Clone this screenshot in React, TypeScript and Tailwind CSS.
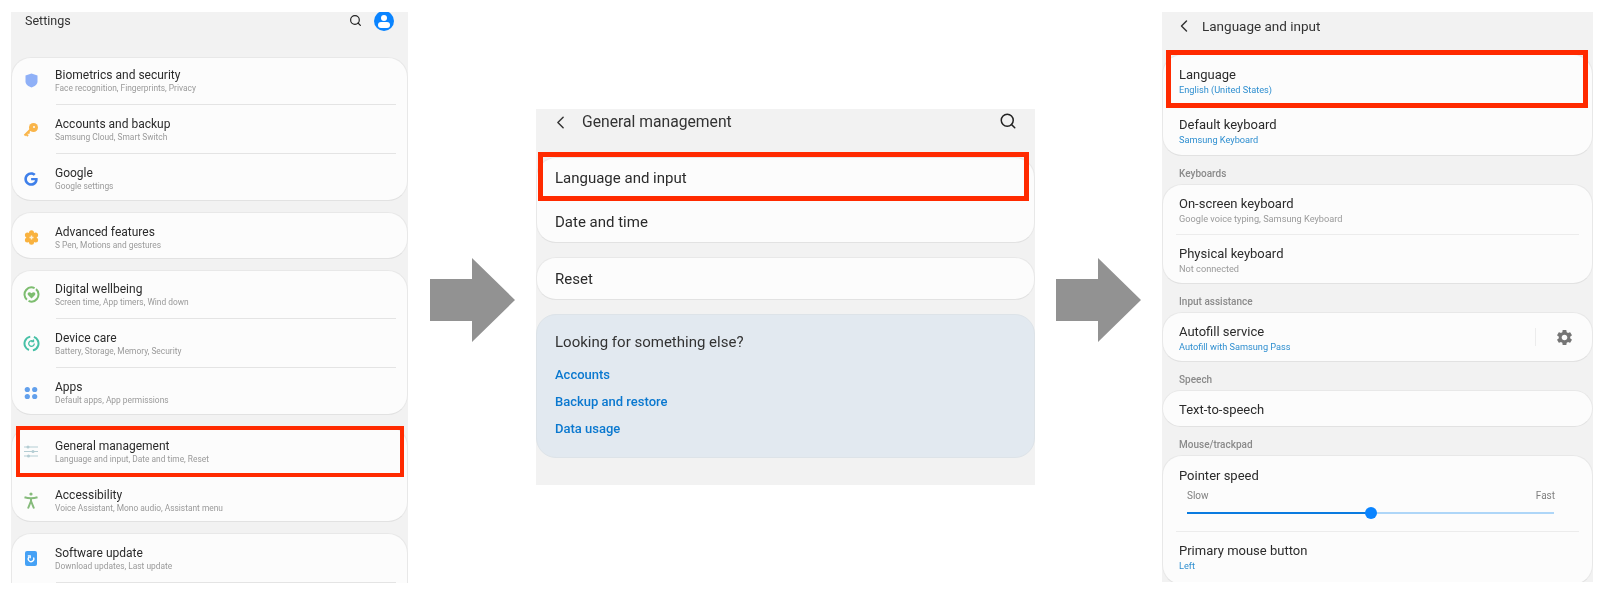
import { ChevronLeft, Search } from "lucide-react";
import { MdSettings } from "react-icons/md";
import { FaGoogle } from "react-icons/fa";
import type { ReactNode } from "react";

type RowProps = {
  icon?: ReactNode;
  title: string;
  sub: string;
  divider?: boolean;
};

const ShieldIcon = () => (
  <svg width="13" height="15" viewBox="0 0 13 15">
    <path d="M6.500.5 12.500 2.500v6c0 3-3 5-6 6-3-1-6-3-6-6v-6z" fill="#8fb0f7" />
  </svg>
);

const KeyIcon = () => (
  <svg width="16" height="16" viewBox="0 0 16 16">
    <circle cx="10.500" cy="5.500" r="4.500" fill="#f9b54a" />
    <circle cx="11" cy="5" r="1" fill="#fcfcfc" />
    <path d="M7.500 7.500 1.500 13.500M3 12l2 2M5 10l1.500 1.500" stroke="#f9b54a" strokeWidth="2" fill="none" />
  </svg>
);

const FlowerIcon = () => (
  <svg width="15" height="15" viewBox="0 0 15 15">
    <g fill="#f9b23f">
      <circle cx="7.500" cy="7.500" r="5.200" />
      <circle cx="7.500" cy="2.800" r="2.500" />
      <circle cx="7.500" cy="12.200" r="2.500" />
      <circle cx="3.400" cy="5.100" r="2.500" />
      <circle cx="11.600" cy="5.100" r="2.500" />
      <circle cx="3.400" cy="9.900" r="2.500" />
      <circle cx="11.600" cy="9.900" r="2.500" />
    </g>
    <path d="M7.500 5.500v4M5.500 7.500h4" stroke="#fdf0d8" strokeWidth="1.400" />
  </svg>
);

const WellbeingIcon = () => (
  <svg width="17" height="17" viewBox="0 0 17 17">
    <circle cx="8.500" cy="8.500" r="7" stroke="#7dbd6f" strokeWidth="2" fill="none" strokeDasharray="20 2 20 2" transform="rotate(-50 8.500 8.500)" />
    <path d="M8.500 12.500 5 9c-1.400-1.700 1-4 3.500-1.800C11 5 13.400 7.300 12 9z" fill="#7dbd6f" />
  </svg>
);

const CareIcon = () => (
  <svg width="17" height="17" viewBox="0 0 17 17">
    <circle cx="8.500" cy="8.500" r="7" stroke="#46c0a6" strokeWidth="2" fill="none" strokeDasharray="18 4 18 4" transform="rotate(-70 8.500 8.500)" />
    <path d="M11.300 8.500a2.800 2.800 0 1 1-1.200-2.300M10.500 4.500v2.200H8.300" stroke="#46c0a6" strokeWidth="1.300" fill="none" />
  </svg>
);

const AppsIcon = () => (
  <svg width="14" height="14" viewBox="0 0 14 14" fill="#62a0ec">
    <circle cx="3.300" cy="3.500" r="2.600" />
    <circle cx="10.700" cy="3.500" r="2.600" />
    <circle cx="3.300" cy="10.500" r="2.600" />
    <circle cx="10.700" cy="10.500" r="2.600" />
  </svg>
);

const SlidersIcon = () => (
  <svg width="14" height="13" viewBox="0 0 14 13" fill="#b4cdd3">
    <rect x="0" y="1.500" width="14" height="1" />
    <rect x="0" y="6" width="14" height="1" />
    <rect x="0" y="10.500" width="14" height="1" />
    <circle cx="4" cy="2" r="1.500" />
    <circle cx="9" cy="6.500" r="1.500" />
    <circle cx="4.500" cy="11" r="1.500" />
  </svg>
);

const PersonIcon = () => (
  <svg width="14" height="17" viewBox="0 0 14 17">
    <circle cx="7" cy="2" r="1.600" fill="#86bb7b" />
    <path d="M.5 5.200c2.500.8 4 1 6.500 1s4-.2 6.500-1M7 6.500V9M7 9l-3 7.500M7 9l3 7.500" stroke="#86bb7b" strokeWidth="2" fill="none" />
  </svg>
);

const UpdateIcon = () => (
  <svg width="12" height="15" viewBox="0 0 12 15">
    <rect width="12" height="15" rx="2" fill="#45a1f5" />
    <path d="M8.500 6.500a2.800 2.800 0 1 1-4.500-.6M2.800 4.800h2.400v2.400" stroke="#ffffff" strokeWidth="1.300" fill="none" />
  </svg>
);

function Card({ children, className }: { children: ReactNode; className?: string }) {
  return (
    <div className={"border border-[#e8e8e8] border-b-[#e2e2e2] rounded-[20px] bg-[#fcfcfc] " + (className ?? "")}>
      {children}
    </div>
  );
}

function SettingRow({ icon, title, sub, divider }: RowProps) {
  return (
    <div className="relative flex h-[49px] items-center pb-[3px]">
      <div className="mr-[5px] flex w-[38px] shrink-0 justify-center pb-[1px]">{icon}</div>
      <div className="flex flex-col">
        <span className="text-[12px] leading-[14px] text-[#2b2b2b]">{title}</span>
        <span className="text-[8.4px] leading-[12px] text-[#9a9a9a]">{sub}</span>
      </div>
      {divider && <div className="absolute bottom-[2px] left-[44px] right-[11px] h-px bg-[#e4e4e4]" />}
    </div>
  );
}

function SettingsPanel() {
  return (
    <div className="relative ml-[11px] mt-[12px] h-[571px] w-[397px] shrink-0 overflow-hidden bg-[#f2f2f2]">
      <div className="flex h-[45px] items-start pl-[14px] pt-[1px]">
        <span className="text-[12.5px] leading-[16px] text-[#333333]">Settings</span>
        <Search className="absolute left-[338px] top-[2px] text-[#222222]" size={13} strokeWidth={2.2} />
        <div className="absolute left-[363px] top-[-1px] h-[20px] w-[20px] overflow-hidden rounded-full bg-[#0a84ff]">
          <div className="mx-auto mt-[4px] h-[6px] w-[6px] rounded-full bg-white" />
          <div className="mx-auto mt-[1px] h-[6px] w-[12px] rounded-full bg-white" />
        </div>
      </div>
      <div className="flex flex-col gap-[11px]">
        <Card className="h-[144px]">
          <SettingRow icon={<ShieldIcon />} title="Biometrics and security" sub="Face recognition, Fingerprints, Privacy" divider />
          <SettingRow icon={<KeyIcon />} title="Accounts and backup" sub="Samsung Cloud, Smart Switch" divider />
          <SettingRow icon={<FaGoogle className="text-[#3f80ea]" size={14} />} title="Google" sub="Google settings" />
        </Card>
        <Card className="h-[47px] pt-[2px]">
          <SettingRow icon={<FlowerIcon />} title="Advanced features" sub="S Pen, Motions and gestures" />
        </Card>
        <Card className="h-[145px] pt-[1px]">
          <SettingRow icon={<WellbeingIcon />} title="Digital wellbeing" sub="Screen time, App timers, Wind down" divider />
          <SettingRow icon={<CareIcon />} title="Device care" sub="Battery, Storage, Memory, Security" divider />
          <SettingRow icon={<AppsIcon />} title="Apps" sub="Default apps, App permissions" />
        </Card>
        <Card className="h-[96px] pt-[2px]">
          <SettingRow icon={<SlidersIcon />} title="General management" sub="Language and input, Date and time, Reset" />
          <SettingRow icon={<PersonIcon />} title="Accessibility" sub="Voice Assistant, Mono audio, Assistant menu" />
        </Card>
        <Card className="h-[70px] pt-[2px]">
          <SettingRow icon={<UpdateIcon />} title="Software update" sub="Download updates, Last update" divider />
        </Card>
      </div>
      {/* highlight */}
      <div className="absolute left-[5px] top-[414px] h-[51px] w-[388px] border-4 border-[#ff2a00]" />
    </div>
  );
}

function Arrow({ className }: { className: string }) {
  return (
    <svg className={className} width="85" height="84" viewBox="0 0 85 84">
      <path d="M0 21H42V0L85 42 42 84V63H0z" fill="#929292" />
    </svg>
  );
}

function PlainRow({ label, className }: { label: string; className?: string }) {
  return (
    <div className={"flex h-[43px] items-center pl-[18px] text-[15px] text-[#2b2b2b] " + (className ?? "")}>{label}</div>
  );
}

function GeneralPanel() {
  return (
    <div className="relative ml-[21px] mt-[109px] h-[376px] w-[499px] shrink-0 bg-[#f2f2f2]">
      <div className="flex h-[48px] items-start pt-[2px]">
        <ChevronLeft className="ml-[14px] mt-[1px] text-[#333333]" size={21} strokeWidth={1.7} />
        <span className="ml-[11px] text-[15.7px] leading-[21px] text-[#333333]">General management</span>
        <Search className="ml-auto mr-[18px] mt-[1px] text-[#222222]" size={18} strokeWidth={2} />
      </div>
      <div className="flex flex-col gap-[14px]">
        <Card className="h-[86px]">
          <PlainRow label="Language and input" className="pb-[2px]" />
          <PlainRow label="Date and time" />
        </Card>
        <Card className="h-[43px]">
          <PlainRow label="Reset" className="h-[41px]" />
        </Card>
        <div className="h-[144px] rounded-[20px] border border-[#dde3e8] bg-[#e2e9f0] pl-[18px] pt-[17px]">
          <div className="text-[15px] leading-[20px] text-[#333333]">Looking for something else?</div>
          <div className="mt-[14px] flex flex-col gap-[9px] text-[13px] font-medium leading-[18px] text-[#0a78cf]">
            <span>Accounts</span>
            <span>Backup and restore</span>
            <span>Data usage</span>
          </div>
        </div>
      </div>
      <div className="absolute left-[2px] top-[43px] h-[49px] w-[491px] border-[5px] border-[#ff2a00]" />
    </div>
  );
}

function InputRow({ title, sub, subColor, height }: { title: string; sub: string; subColor: string; height: string }) {
  return (
    <div className={"flex flex-col justify-center pl-[16px] " + height}>
      <span className="text-[13px] leading-[16px] text-[#2b2b2b]">{title}</span>
      <span className={"text-[9.2px] leading-[13px] " + subColor}>{sub}</span>
    </div>
  );
}

function Category({ label }: { label: string }) {
  return (
    <div className="flex h-[28px] items-center pl-[17px] pt-[6px] text-[10px] font-medium text-[#8a8a8a]">{label}</div>
  );
}

function LanguagePanel() {
  return (
    <div className="relative ml-[21px] mt-[12px] h-[570px] w-[431px] shrink-0 overflow-hidden bg-[#f2f2f2]">
      <div className="flex h-[42px] items-start pt-[4px]">
        <ChevronLeft className="ml-[12px] text-[#333333]" size={20} strokeWidth={1.7} />
        <span className="ml-[8px] text-[13.5px] leading-[20px] text-[#333333]">Language and input</span>
      </div>
      <Card className="h-[102px]">
        <InputRow title="Language" sub="English (United States)" subColor="text-[#2f8fd0]" height="h-[51px] pt-[2px]" />
        <InputRow title="Default keyboard" sub="Samsung Keyboard" subColor="text-[#2f8fd0]" height="h-[49px] pt-[2px]" />
      </Card>
      <Category label="Keyboards" />
      <Card className="h-[100px]">
        <InputRow title="On-screen keyboard" sub="Google voice typing, Samsung Keyboard" subColor="text-[#9a9a9a]" height="h-[49px] pt-[2px]" />
        <div className="mx-[13px] h-px bg-[#ececec]" />
        <InputRow title="Physical keyboard" sub="Not connected" subColor="text-[#9a9a9a]" height="h-[48px] pt-[3px]" />
      </Card>
      <Category label="Input assistance" />
      <Card className="relative h-[50px]">
        <InputRow title="Autofill service" sub="Autofill with Samsung Pass" subColor="text-[#2f8fd0]" height="h-[48px] pt-[3px]" />
        <div className="absolute left-[372px] top-[15px] h-[18px] w-px bg-[#ececec]" />
        <MdSettings className="absolute left-[392px] top-[15px] text-[#757575]" size={19} />
      </Card>
      <Category label="Speech" />
      <Card className="h-[37px]">
        <div className="flex h-[35px] items-center pl-[16px] pt-[2px] text-[13px] text-[#2b2b2b]">Text-to-speech</div>
      </Card>
      <Category label="Mouse/trackpad" />
      <Card className="h-[130px]">
        <div className="h-[75px] px-[16px] pt-[12px]">
          <div className="text-[13px] leading-[16px] text-[#2b2b2b]">Pointer speed</div>
          <div className="mt-[5px] flex justify-between pl-[8px] pr-[21px] text-[10px] leading-[14px] text-[#808080]">
            <span>Slow</span>
            <span>Fast</span>
          </div>
          <div className="relative ml-[8px] mt-[9px] h-[2px] w-[367px] bg-[#aed6f8]">
            <div className="h-[2px] w-[184px] bg-[#0a7be0]" />
            <div className="absolute left-[178px] top-[-5px] h-[12px] w-[12px] rounded-full bg-[#0a84ff]" />
          </div>
        </div>
        <div className="mx-[13px] h-px bg-[#ececec]" />
        <InputRow title="Primary mouse button" sub="Left" subColor="text-[#2f8fd0]" height="h-[50px]" />
      </Card>
      <div className="absolute left-[4px] top-[38px] h-[58px] w-[422px] border-[5px] border-[#ff2a00]" />
    </div>
  );
}

export default function App() {
  return (
    <div className="flex h-[590px] w-[1600px] items-start overflow-hidden bg-white font-['Roboto',sans-serif] blur-[0.3px]">
      <SettingsPanel />
      <Arrow className="ml-[22px] mt-[258px] shrink-0" />
      <GeneralPanel />
      <Arrow className="ml-[21px] mt-[258px] shrink-0" />
      <LanguagePanel />
    </div>
  );
}
